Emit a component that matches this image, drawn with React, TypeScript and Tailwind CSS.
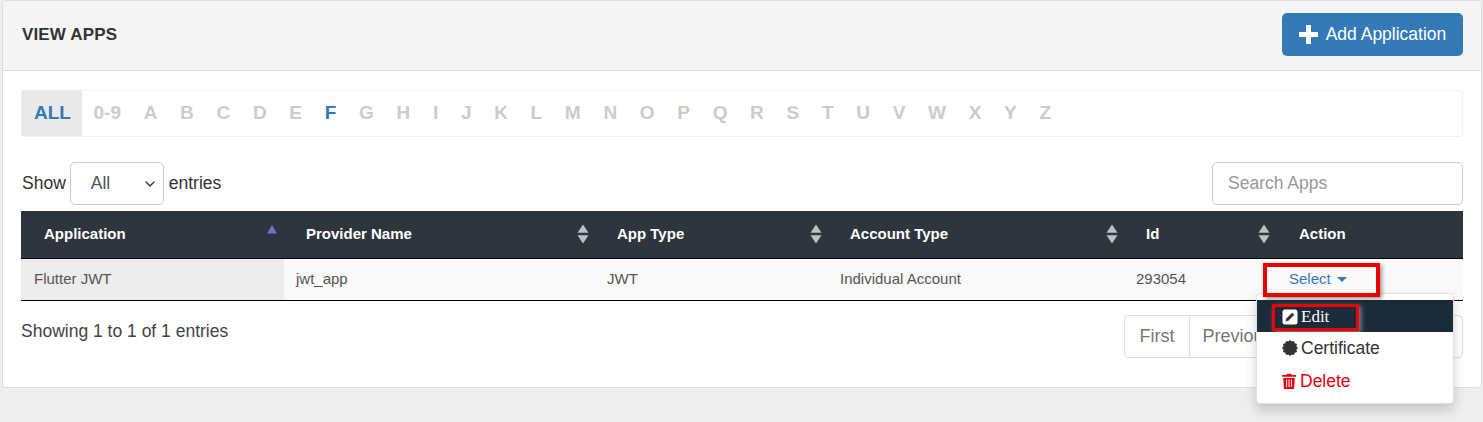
import React from "react";
import { ChevronDown } from "lucide-react";

const letters = ["0-9", "A", "B", "C", "D", "E", "F", "G", "H", "I", "J", "K", "L", "M", "N", "O", "P", "Q", "R", "S", "T", "U", "V", "W", "X", "Y", "Z"];

// sort arrows in the table head
const SortIcon: React.FC<{ asc?: boolean }> = ({ asc }) => (
  <svg width="12" height="20" viewBox="0 0 12 20" className="absolute right-[6px] top-[13px]">
    {asc ? (
      <path d="M6 1 L11 9.5 H1 Z" fill="#7470c9" />
    ) : (
      <>
        <path d="M6 .5 L11.5 8.8 H.5 Z" fill="#bcc0c4" />
        <path d="M6 19.5 L11.5 11.2 H.5 Z" fill="#bcc0c4" />
      </>
    )}
  </svg>
);

const Th: React.FC<{ label: string; width: string; asc?: boolean; noSort?: boolean; wide?: boolean }> = ({ label, width, asc, noSort, wide }) => (
  <th className={`${width} relative h-[47px] ${wide ? "pl-[23px]" : "pl-[22px]"} text-left text-[15px] font-bold text-white`}>
    {label}
    {!noSort && <SortIcon asc={asc} />}
  </th>
);

const App: React.FC = () => {
  return (
    <div className="h-[422px] w-[1483px] overflow-hidden bg-[#eeeeee] pl-[2px] font-['Liberation_Sans',Arial,sans-serif] text-[#333333]">
      <div className="relative h-[388px] w-[1480px] rounded-[4px] border border-[#dddddd] bg-white">
        {/* header */}
        <div className="flex h-[70px] items-center justify-between rounded-t-[4px] border-b border-[#dddddd] bg-[#f5f5f5] pb-[2px] pl-[19px] pr-[18px]">
          <h3 className="text-[17px] font-bold tracking-[0.15px] text-[#333333]">VIEW APPS</h3>
          <button className="flex h-[43px] w-[181px] items-center justify-center gap-[8px] rounded-[5px] bg-[#337ab7] text-[17.5px] text-white">
            <svg width="19" height="19" viewBox="0 0 19 19">
              <path d="M7 0 H12 V7 H19 V12 H12 V19 H7 V12 H0 V7 H7 Z" fill="#ffffff" />
            </svg>
            Add Application
          </button>
        </div>

        <div className="px-[18px] pt-[19px]">
          {/* alphabet filter */}
          <div className="flex h-[47px] w-[1442px] items-center rounded-[3px] border border-[#f0f0f0] text-[19px] font-bold text-[#cccccc]">
            <span className="flex h-full w-[60px] items-center justify-center bg-[#e9e9e9] pl-[1px] text-[#337ab7]">ALL</span>
            <div className="flex items-center pl-[11.5px]">
              {letters.map((l) => (
                <span key={l} className={`mr-[22.7px] ${l === "F" ? "text-[#337ab7]" : ""}`}>
                  {l}
                </span>
              ))}
            </div>
          </div>

          {/* length + search */}
          <div className="mt-[25px] flex h-[43px] w-[1442px] items-center justify-between text-[17.5px]">
            <div className="flex items-center">
              <span className="pl-[1px]">Show</span>
              <div className="ml-[4px] mr-[5px] flex h-[43px] w-[94px] items-center justify-between rounded-[5px] border border-[#cccccc] pl-[20px] pr-[5px] text-[#555555]">
                All
                <ChevronDown size={16} strokeWidth={2} className="text-[#333333]" />
              </div>
              <span>entries</span>
            </div>
            <div className="flex h-[43px] w-[251px] items-center rounded-[5px] border border-[#cccccc] pl-[15px] text-[#999999]">Search Apps</div>
          </div>

          {/* table */}
          <table className="mt-[6px] w-[1442px] table-fixed border-collapse">
            <thead>
              <tr className="bg-[#2e353d]">
                <Th label="Application" width="w-[263px]" asc wide />
                <Th label="Provider Name" width="w-[311px]" />
                <Th label="App Type" width="w-[233px]" />
                <Th label="Account Type" width="w-[296px]" />
                <Th label="Id" width="w-[152px]" />
                <Th label="Action" width="w-[187px]" noSort wide />
              </tr>
            </thead>
            <tbody>
              <tr className="h-[42px] border-y border-black bg-[#f9f9f9] text-[15px] text-[#555555]">
                <td className="bg-[#ececec] pl-[13px]">Flutter JWT</td>
                <td className="pl-[12px]">jwt_app</td>
                <td className="pl-[12px]">JWT</td>
                <td className="pl-[12px]">Individual Account</td>
                <td className="pl-[12px]">293054</td>
                <td className="pl-[13px] text-[#337ab7]">
                  <span className="inline-flex items-center gap-[6px]">
                    Select
                    <span className="mt-[1px] h-0 w-0 border-x-[5px] border-t-[5px] border-x-transparent border-t-[#337ab7]" />
                  </span>
                </td>
              </tr>
            </tbody>
          </table>

          {/* footer */}
          <div className="mt-[14px] flex w-[1442px] items-start justify-between text-[17.5px] text-[#555555]">
            <span className="mt-[4px] leading-[24px] text-[#444444]">Showing 1 to 1 of 1 entries</span>
            <div className="flex h-[43px] w-[339px] rounded-[5px] border border-[#dddddd] text-[18px] text-[#777777]">
              <span className="flex w-[65px] items-center justify-center border-r border-[#dddddd]">First</span>
              <span className="flex w-[96px] items-center justify-center border-r border-[#dddddd]">Previous</span>
              <span className="flex w-[40px] items-center justify-center border-r border-[#dddddd]">1</span>
              <span className="flex w-[68px] items-center justify-center border-r border-[#dddddd]">Next</span>
              <span className="flex flex-1 items-center justify-center">Last</span>
            </div>
          </div>
        </div>

        {/* dropdown */}
        <div className="absolute left-[1253px] top-[292px] h-[111px] w-[198px] rounded-[4px] border border-[#e0e0e0] bg-white pt-[6px] text-[17.5px] shadow-[0_6px_12px_rgba(0,0,0,0.18)]">
          <div className="relative flex h-[32px] items-center bg-[#1c2b3a] pl-[25px] pt-[1px] font-['Liberation_Serif',serif] text-[17px] text-white">
            <svg width="16" height="16" viewBox="0 0 16 16" className="mr-[3px]">
              <rect x="0.5" y="0.5" width="15" height="15" rx="2.5" fill="#ffffff" />
              <path d="M3.5 12.5 L4.3 9.6 L10.2 3.7 L12.3 5.8 L6.4 11.7 Z" fill="#333333" />
            </svg>
            Edit
            <div className="absolute left-[15px] top-[4px] h-[27px] w-[87px] border-[3px] border-[#ee0000] shadow-[2px_2px_5px_rgba(255,255,255,0.45)]" />
          </div>
          <div className="flex h-[32px] items-center pl-[25px] text-[#333333]">
            <svg width="16" height="16" viewBox="0 0 16 16" className="mr-[3px]">
              <path d="M8 0 L9.8 1.6 L12 .9 L12.7 3.2 L15 3.9 L14.4 6.2 L16 8 L14.4 9.8 L15 12.1 L12.7 12.8 L12 15.1 L9.8 14.4 L8 16 L6.2 14.4 L4 15.1 L3.3 12.8 L1 12.1 L1.6 9.8 L0 8 L1.6 6.2 L1 3.9 L3.3 3.2 L4 .9 L6.2 1.6 Z" fill="#333333" />
            </svg>
            Certificate
          </div>
          <div className="flex h-[33px] items-center pl-[25px] pt-[1px] text-[#e2000f]">
            <svg width="14" height="16" viewBox="0 0 14 16" className="mr-[4px]">
              <path d="M4.5 2 V.8 H9.5 V2 H14 V3.8 H0 V2 Z M1.2 5 H12.8 L12 16 H2 Z" fill="#e2000f" />
              <path d="M4.6 6.5 V14 M7 6.5 V14 M9.4 6.5 V14" stroke="#ffffff" strokeWidth="1" />
            </svg>
            Delete
          </div>
        </div>

        {/* red highlight over select, sits above the dropdown */}
        <div className="absolute left-[1260px] top-[262px] h-[34px] w-[117px] border-[4px] border-[#ee0000] shadow-[2px_2px_4px_rgba(0,0,0,0.4)]" />
      </div>
    </div>
  );
};

export default App;
